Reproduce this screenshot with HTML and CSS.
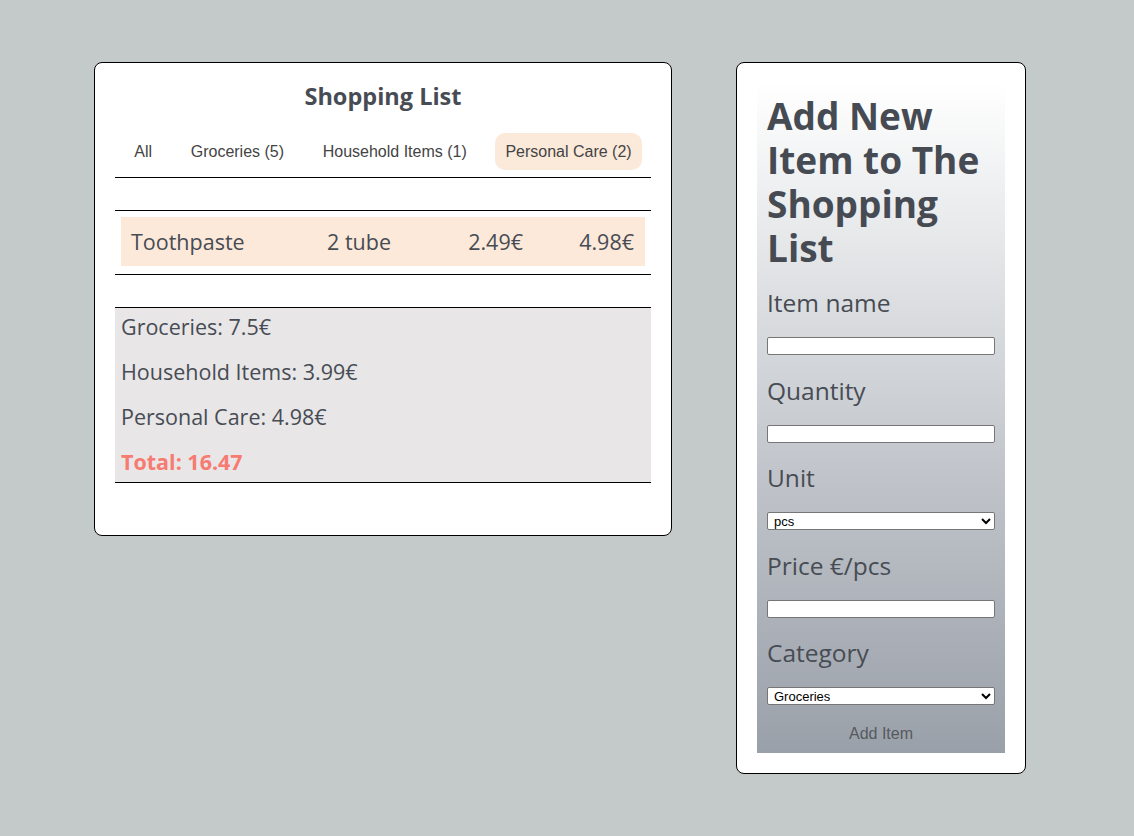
FILE: index.html
```html
<!DOCTYPE html>
<html lang="en">
<head>
<meta charset="utf-8">
<title>Shopping List</title>
<link rel="stylesheet" href="styles.css">
</head>
<body>
<main class="page">
  <section class="card list-card">
    <h1 class="list-title">Shopping List</h1>
    <nav class="tabs">
      <button class="tab">All</button>
      <button class="tab">Groceries (5)</button>
      <button class="tab">Household Items (1)</button>
      <button class="tab tab-active">Personal Care (2)</button>
    </nav>
    <div class="items">
      <div class="item-row">
        <span class="c-name">Toothpaste</span>
        <span class="c-qty">2 tube</span>
        <span class="c-price">2.49€</span>
        <span class="c-total">4.98€</span>
      </div>
    </div>
    <div class="summary">
      <p>Groceries: 7.5€</p>
      <p>Household Items: 3.99€</p>
      <p>Personal Care: 4.98€</p>
      <p class="grand">Total: 16.47</p>
    </div>
  </section>

  <section class="card form-card">
    <form class="form-panel">
      <h2 class="form-title">Add New Item to The Shopping List</h2>
      <label class="f-label" for="name">Item name</label>
      <input class="f-input" id="name" type="text">
      <label class="f-label" for="qty">Quantity</label>
      <input class="f-input" id="qty" type="text">
      <label class="f-label" for="unit">Unit</label>
      <select class="f-input f-select" id="unit"><option>pcs</option></select>
      <label class="f-label" for="price">Price €/pcs</label>
      <input class="f-input" id="price" type="text">
      <label class="f-label" for="cat">Category</label>
      <select class="f-input f-select" id="cat"><option>Groceries</option></select>
      <button class="add-btn" type="button">Add Item</button>
    </form>
  </section>
</main>
</body>
</html>
```

FILE: styles.css
```css
html, body {
  margin: 0;
  padding: 0;
  background: #c4c9c9;
}
body {
  font-family: "Open Sans", "Noto Sans", sans-serif;
  color: #474c54;
}
.page {
  display: flex;
  align-items: flex-start;
  gap: 64px;
  padding: 62px 0 0 94px;
}
.card {
  background: #fff;
  border: 1px solid #000;
  border-radius: 8px;
  box-sizing: border-box;
}
.list-card {
  width: 578px;
  padding: 20px 20px 52px;
}
.list-title {
  margin: 0;
  text-align: center;
  font-size: 23.5px;
  line-height: 26px;
  font-weight: 700;
}
.tabs {
  margin-top: 24px;
  display: flex;
  justify-content: space-around;
  padding-bottom: 7px;
  border-bottom: 1px solid #000;
}
.tab {
  font-family: "Liberation Sans", Arial, sans-serif;
  font-size: 16px;
  line-height: 17px;
  color: #444;
  background: transparent;
  border: 0;
  border-radius: 10px;
  padding: 10px 10px;
}
.tab-active {
  background: #fbe9da;
}
.items {
  margin-top: 32px;
  border-top: 1px solid #000;
  border-bottom: 1px solid #000;
  padding: 6px 6px 8px;
}
.item-row {
  display: grid;
  grid-template-columns: 196px 90px 106px 1fr;
  align-items: center;
  height: 49px;
  padding: 0 11px 0 10px;
  background: #fce9da;
  font-size: 21.5px;
}
.c-price, .c-total {
  text-align: right;
}
.summary {
  margin-top: 32px;
  border-top: 1px solid #000;
  border-bottom: 1px solid #000;
  background: #e8e6e7;
  padding: 7px 6px 8px;
  font-size: 21.5px;
  line-height: 24px;
}
.summary p {
  margin: 0 0 21px;
}
.summary p:last-child {
  margin-bottom: 0;
}
.grand {
  color: #f77b70;
  font-weight: 700;
}
.form-card {
  width: 290px;
  padding: 20px;
}
.form-panel {
  display: flex;
  flex-direction: column;
  align-items: stretch;
  padding: 10px 10px 0;
  background: linear-gradient(to bottom, #ffffff 0%, #e4e6e8 25%, #bfc3c9 60%, #9aa0a9 100%);
}
.form-title {
  margin: 1px 0 0;
  font-size: 37px;
  line-height: 44px;
  font-weight: 700;
  color: #464b53;
}
.f-label {
  display: block;
  font-size: 24.5px;
  line-height: 28px;
  margin-top: 19px;
  margin-bottom: 20px;
}
.f-label + .f-input {
  margin-bottom: 2.5px;
}
.f-input {
  box-sizing: border-box;
  height: 18px;
  width: 100%;
  border: 1px solid #767676;
  border-radius: 2px;
  background: #fff;
  font-family: "Liberation Sans", Arial, sans-serif;
  font-size: 13px;
  padding: 0 2px;
  margin: 0;
}
.f-select {
  color: #000;
}
.add-btn {
  margin-top: 6px;
  font-family: "Liberation Sans", Arial, sans-serif;
  font-size: 16px;
  line-height: 19px;
  color: #555a60;
  background: transparent;
  border: 0;
  padding: 10px 0;
}
```
